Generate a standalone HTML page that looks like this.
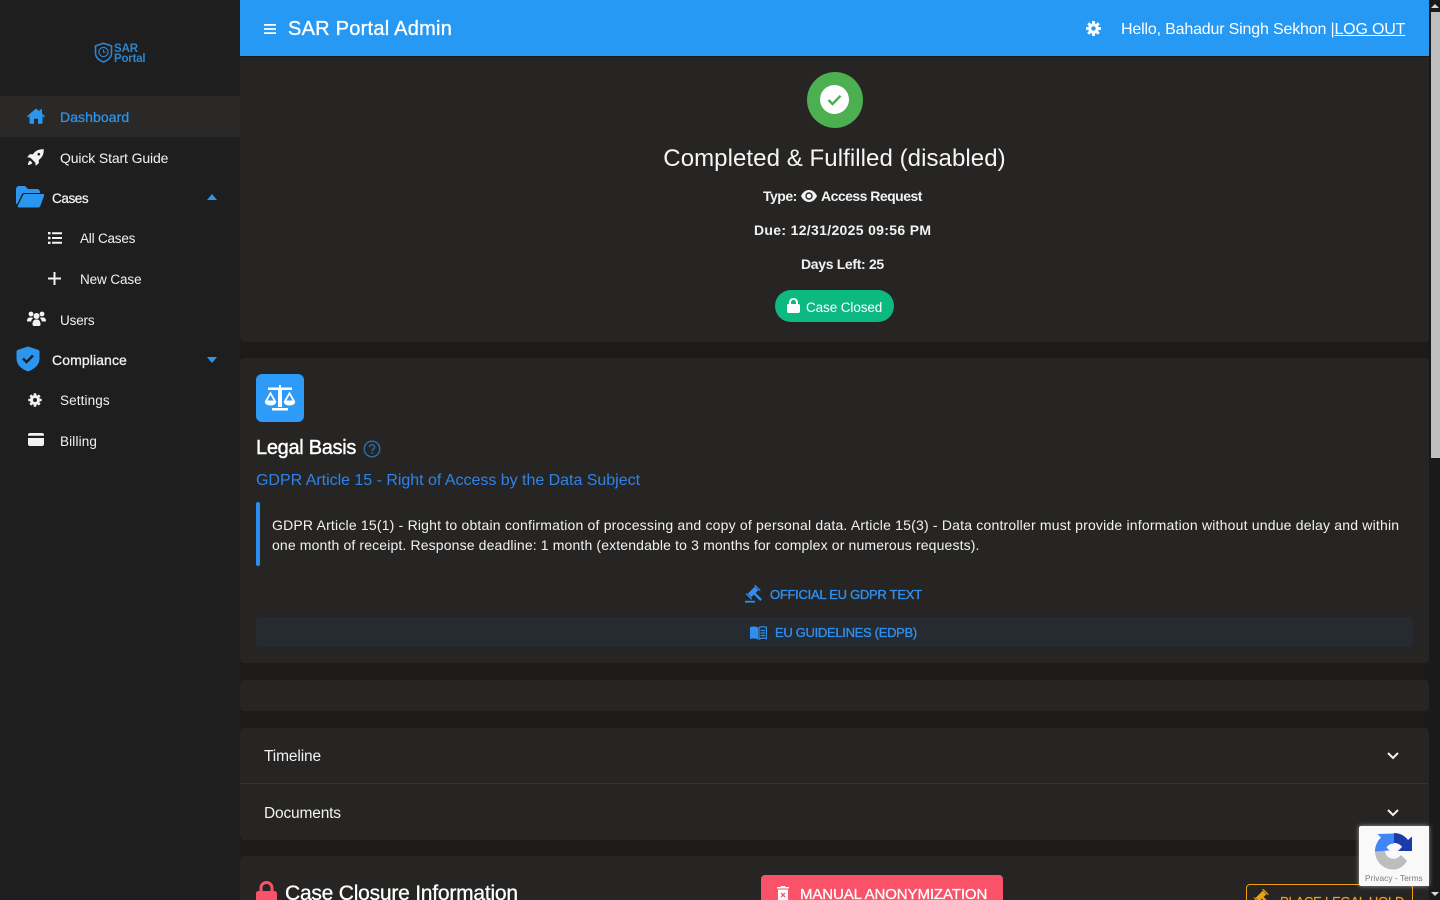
<!DOCTYPE html>
<html lang="en"><head><meta charset="utf-8"><title>SAR Portal Admin</title>
<style>
html,body{margin:0;padding:0;width:1440px;height:900px;overflow:hidden;background:#1c1b1a;font-family:"Liberation Sans",sans-serif;color:#f2f2f2}
#w{position:relative;width:1440px;height:900px;overflow:hidden}
.a{position:absolute}
.t{position:absolute;white-space:nowrap;line-height:20px;height:20px}
.c{left:240px;width:1189px;text-align:center}
.card{position:absolute;left:240px;width:1189px;background:#262524;border-radius:4px}
.s{font-size:14px}
.b{font-weight:bold}
svg{position:absolute;display:block}
</style></head><body><div id="w">

<!-- sidebar -->
<div class="a" style="left:0;top:0;width:240px;height:900px;background:#1f1e1e"></div>
<div class="a" style="left:0;top:96px;width:240px;height:41px;background:#2a2928"></div>

<svg style="left:94px;top:42px" width="19" height="21" viewBox="0 0 19 21" fill="none" stroke="#2a85d0" stroke-width="1.6"><path d="M9.5 1.2 17.5 4v7c0 4.500-3.600 7.300-8 9-4.400-1.700-8-4.500-8-9V4z"/><circle cx="9.5" cy="10" r="4.6" stroke-width="1.2"/><path d="M9.5 7.5V10.300H11.600" stroke-width="1"/></svg>
<div class="t b" style="left:114px;top:39px;font-size:11.5px;color:#2a85d0;letter-spacing:-.1px">SAR</div>
<div class="t b" style="left:114px;top:49px;font-size:11.5px;color:#2a85d0;letter-spacing:-.2px">Portal</div>

<svg style="left:27px;top:108px" width="18" height="16" viewBox="0 0 18 16" fill="#2b96ee"><path d="M9 .5 0 8.200l1 1.200L2.500 8.200V15c0 .5.300.8.800.8H7v-5h4v5h3.700c.5 0 .8-.3.8-.8V8.200L17 9.400l1-1.200-3-2.600V1.500h-2.500v1.900z"/></svg>
<div class="t s" style="left:60px;top:107px;color:#2b96ee;-webkit-text-stroke:.25px #2b96ee;letter-spacing:.08px">Dashboard</div>

<svg style="left:27px;top:149px" width="17" height="17" viewBox="0 0 17 17" fill="#f2f2f2"><path d="M16.700.3C13 0 9.500 1 7.200 3.800L6 5.200H2.700L.2 8.300l3.200.4 4.900 4.900.4 3.200 3.100-2.500v-3.300l1.400-1.200C15.800 7.500 17 4 16.700.3zM3 11.500C1.500 12.300 1 14.500.9 16c1.500-.1 3.600-.6 4.500-2.100z"/><circle cx="11.800" cy="5.200" r="1.300" fill="#1f1e1e"/></svg>
<div class="t s" style="left:60px;top:148px;letter-spacing:-.13px">Quick Start Guide</div>

<svg style="left:16px;top:186px" width="28" height="22" viewBox="0 0 28 22" fill="#2b96ee"><path d="M0 3a3 3 0 0 1 3-3h6l3 3h9a3 3 0 0 1 3 3v1H8.500c-1.300 0-2.500.8-3 2L1 18.500C.3 18 0 17.500 0 16.500z"/><path d="M7 9.200c.3-.7 1-1.200 1.800-1.200H27c1 0 1.500.8 1.200 1.600l-4 10.700c-.4.800-1 1.200-1.900 1.200H3c-1 0-1.500-.8-1.200-1.600z"/></svg>
<div class="t s" style="left:52px;top:188px;font-size:13.5px;line-height:21px;-webkit-text-stroke:.25px #f2f2f2;letter-spacing:-.4px">Cases</div>
<svg style="left:207px;top:194px" width="10" height="6" viewBox="0 0 10 6" fill="#2b96ee"><path d="M0 6 5 0l5 6z"/></svg>

<svg style="left:48px;top:232px" width="14" height="12" viewBox="0 0 14 12" fill="#f2f2f2"><path d="M0 0h2.500v2.400H0zM4 .2h10v2H4zM0 4.800h2.500v2.400H0zM4 5h10v2H4zM0 9.600h2.500V12H0zM4 9.800h10v2H4z"/></svg>
<div class="t" style="left:80px;top:229px;font-size:13.5px;letter-spacing:-.2px">All Cases</div>

<svg style="left:48px;top:272px" width="13" height="13" viewBox="0 0 13 13" fill="#f2f2f2"><path d="M5.500 0h2v5.500H13v2H7.500V13h-2V7.500H0v-2h5.500z"/></svg>
<div class="t" style="left:80px;top:270px;font-size:13.5px;letter-spacing:-.1px">New Case</div>

<svg style="left:27px;top:311px" width="19" height="15" viewBox="0 0 19 15" fill="#f2f2f2"><circle cx="4" cy="3" r="2.400"/><circle cx="15" cy="3" r="2.400"/><circle cx="9.500" cy="5" r="3"/><path d="M0 10c0-2 1-3.500 2.500-3.500H5c.5 0 1 .2 1.300.5C5 8 4.300 9.200 4.200 10.500H1c-.6 0-1-.2-1-.5zM19 10c0 .3-.4.5-1 .5h-3.200c-.1-1.300-.8-2.500-2.100-3.500.3-.3.800-.5 1.300-.5h2.500C18 6.500 19 8 19 10zM5.500 13c0-2.500 1.500-4.500 3-4.500h2c1.500 0 3 2 3 4.500v.5c0 .8-.6 1.500-1.500 1.500H7c-.9 0-1.500-.7-1.500-1.500z"/></svg>
<div class="t" style="left:60px;top:311px;font-size:13.5px;letter-spacing:-.15px">Users</div>

<svg style="left:16px;top:346px" width="24" height="26" viewBox="0 0 24 26"><path fill="#2b96ee" d="M12 .5 22 3.800c1 .3 1.500 1 1.500 2v7c0 6-5 10.500-11.500 12.700C5.500 23.300.5 18.800.5 12.800v-7c0-1 .5-1.700 1.500-2z"/><path d="M7 12.500l3.500 3.500 6.500-6.500" fill="none" stroke="#1f1e1e" stroke-width="2.500"/></svg>
<div class="t s" style="left:52px;top:350px;-webkit-text-stroke:.3px #f2f2f2;letter-spacing:.1px">Compliance</div>
<svg style="left:207px;top:357px" width="10" height="6" viewBox="0 0 10 6" fill="#2b96ee"><path d="M0 0h10L5 6z"/></svg>

<svg style="left:28px;top:393px" width="14" height="14" viewBox="0 0 14 14"><path d="M7 .3v13.400M.3 7h13.400M2.300 2.300l9.400 9.400M11.700 2.300l-9.400 9.400" stroke="#f2f2f2" stroke-width="2.600"/><circle cx="7" cy="7" r="5" fill="#f2f2f2"/><circle cx="7" cy="7" r="2" fill="#1f1e1e"/></svg>
<div class="t" style="left:60px;top:391px;font-size:13.5px;letter-spacing:.12px">Settings</div>

<svg style="left:28px;top:433px" width="16" height="13" viewBox="0 0 16 13" fill="#f2f2f2"><path d="M2 0h12a2 2 0 0 1 2 2v.800H0V2a2 2 0 0 1 2-2zM0 5h16v6a2 2 0 0 1-2 2H2a2 2 0 0 1-2-2z"/></svg>
<div class="t" style="left:60px;top:432px;font-size:13.5px;letter-spacing:.15px">Billing</div>

<!-- header -->
<div class="a" style="left:240px;top:0;width:1189px;height:56px;background:#2699f5"></div>
<svg style="left:264px;top:24px" width="12" height="10" viewBox="0 0 12 10" fill="#fff"><path d="M0 0h12v1.800H0zM0 4.100h12v1.800H0zM0 8.200h12V10H0z"/></svg>
<div class="t" style="left:288px;top:19px;font-size:20px;color:#fff;-webkit-text-stroke:.35px #fff;letter-spacing:.25px">SAR Portal Admin</div>
<svg style="left:1086px;top:21px" width="15" height="15" viewBox="0 0 15 15"><path d="M7.500 0v15M0 7.500h15M2.200 2.200l10.600 10.600M12.800 2.200 2.200 12.800" stroke="#fff" stroke-width="2.800"/><circle cx="7.500" cy="7.500" r="5.300" fill="#fff"/><circle cx="7.500" cy="7.500" r="2.200" fill="#2699f5"/></svg>
<div class="t" style="left:1121px;top:20px;font-size:16px;color:#fff;letter-spacing:-.175px">Hello, Bahadur Singh Sekhon |<span style="text-decoration:underline">LOG OUT</span></div>

<!-- hero card -->
<div class="card" style="top:56px;height:286px;border-radius:0 0 4px 4px"></div>
<div class="a" style="left:240px;top:56px;width:1189px;height:1px;background:#1b1a1a"></div>
<div class="a" style="left:807px;top:72px;width:56px;height:56px;border-radius:50%;background:#4caf50"></div>
<div class="a" style="left:820px;top:85px;width:29px;height:29px;border-radius:50%;background:#fff"></div>
<svg style="left:827px;top:94px" width="15" height="12" viewBox="0 0 15 12" fill="none" stroke="#4caf50" stroke-width="2.400"><path d="M1.500 6 5.500 10 13.500 1.800"/></svg>
<div class="t c" style="top:148px;height:22px;line-height:22px;font-size:24px;letter-spacing:.07px;color:#f5f5f5">Completed &amp; Fulfilled (disabled)</div>
<div class="t b" style="left:763px;top:186px;font-size:14px;letter-spacing:-.5px">Type:</div>
<svg style="left:801px;top:190px" width="16" height="12" viewBox="0 0 16 12"><path d="M0 6C1.500 2.500 4.500 0 8 0s6.500 2.500 8 6c-1.500 3.500-4.500 6-8 6S1.500 9.500 0 6z" fill="#f2f2f2"/><circle cx="8" cy="6" r="3.700" fill="#262524"/><circle cx="8" cy="6" r="2.300" fill="#f2f2f2"/></svg>
<div class="t b" style="left:821px;top:186px;font-size:14px;letter-spacing:-.52px">Access Request</div>
<div class="t b" style="left:754px;top:220px;font-size:14px;letter-spacing:.32px">Due: 12/31/2025 09:56 PM</div>
<div class="t b" style="left:801px;top:254px;font-size:14px;letter-spacing:-.33px">Days Left: 25</div>
<div class="a" style="left:775px;top:290px;width:119px;height:32px;border-radius:16px;background:#0cb981"></div>
<svg style="left:787px;top:298px" width="13" height="15" viewBox="0 0 13 15" fill="#fff"><path d="M2 6V4.200a4.500 4.200 0 0 1 9 0V6h.500c.8 0 1.500.7 1.500 1.500v6c0 .8-.7 1.500-1.500 1.500h-10C.7 15 0 14.300 0 13.500v-6C0 6.700.7 6 1.500 6zm2 0h5V4.200a2.500 2.300 0 0 0-5 0z"/></svg>
<div class="t" style="left:806px;top:297px;font-size:13.5px;line-height:21px;color:#fff;letter-spacing:-.1px">Case Closed</div>

<!-- legal basis -->
<div class="card" style="top:358px;height:305px"></div>
<div class="a" style="left:256px;top:374px;width:48px;height:48px;border-radius:6px;background:#2f9bf9"></div>
<svg style="left:264px;top:385px" width="32" height="26" viewBox="0 0 32 26" fill="#fff"><path d="M15 0h2v2.500h11V5H18v17h-4V5H4V2.500h11zM8 23h16v2.500H8z"/><path d="M6.500 6.500 .8 16.500c0 2.600 2.600 4 5.700 4s5.700-1.400 5.700-4zm0 3.500 3 5.500h-6zM25.500 6.500l-5.700 10c0 2.600 2.600 4 5.700 4s5.700-1.400 5.700-4zm0 3.500 3 5.500h-6z"/></svg>
<div class="t" style="left:256px;top:438px;font-size:20px;color:#fff;-webkit-text-stroke:.4px #fff;letter-spacing:-.3px">Legal Basis</div>
<svg style="left:363px;top:440px" width="18" height="18" viewBox="0 0 18 18" fill="none" stroke="#2a6fad" stroke-width="1.400"><circle cx="9" cy="9" r="7.800"/><path d="M6.500 7.200c0-1.500 1.100-2.500 2.600-2.500s2.500 1 2.500 2.300c0 1.900-2.500 2-2.500 4"/><path d="M9.100 12.400v1.400" stroke-width="1.600"/></svg>
<div class="t" style="left:256px;top:471px;font-size:16px;color:#2f83e8;letter-spacing:-.02px">GDPR Article 15 - Right of Access by the Data Subject</div>
<div class="a" style="left:256px;top:502px;width:4px;height:64px;border-radius:2px;background:#2a8df0"></div>
<div class="t" style="left:272px;top:515px;font-size:14px;letter-spacing:.195px;color:#f2f2f2">GDPR Article 15(1) - Right to obtain confirmation of processing and copy of personal data. Article 15(3) - Data controller must provide information without undue delay and within</div>
<div class="t" style="left:272px;top:535px;font-size:14px;letter-spacing:.14px;color:#f2f2f2">one month of receipt. Response deadline: 1 month (extendable to 3 months for complex or numerous requests).</div>
<svg style="left:745px;top:585px" width="17" height="18" viewBox="0 0 17 18" fill="#2f8ff0"><g transform="rotate(45 8 7)"><rect x="5.500" y="2" width="5" height="10"/><rect x="4.200" y=".3" width="8" height="1.300"/><rect x="4.200" y="12.400" width="8" height="1.300"/><rect x="10" y="5.800" width="9.500" height="2.400"/></g><rect x="0" y="15.800" width="10" height="1.800"/></svg>
<div class="t" style="left:770px;top:585px;font-size:13px;color:#2f8ff0;letter-spacing:-.27px;-webkit-text-stroke:.35px #2f8ff0">OFFICIAL EU GDPR TEXT</div>
<div class="a" style="left:256px;top:617px;width:1157px;height:30px;border-radius:4px;background:#252b31"></div>
<svg style="left:750px;top:626px" width="17" height="14" viewBox="0 0 17 14"><path fill="#2f8ff0" d="M0 1.200C2.500.2 6 .2 8 1.500v12C6 12.300 2.500 12.300 0 13z"/><path fill="none" stroke="#2f8ff0" stroke-width="1.200" d="M9 1.700c2-1.200 5-1.200 7.400-.4v11.400c-2.400-.7-5.400-.7-7.400.5zM10.500 4.500H15M10.500 7H15M10.500 9.500H15"/></svg>
<div class="t" style="left:775px;top:623px;font-size:13px;color:#2f8ff0;letter-spacing:-.31px;-webkit-text-stroke:.35px #2f8ff0">EU GUIDELINES (EDPB)</div>

<!-- empty -->
<div class="card" style="top:680px;height:31px"></div>

<!-- accordion -->
<div class="card" style="top:728px;height:112px"></div>
<div class="a" style="left:240px;top:783px;width:1189px;height:1px;background:#343332"></div>
<div class="t" style="left:264px;top:747px;font-size:15.5px;color:#f2f2f2;letter-spacing:-.12px">Timeline</div>
<div class="t" style="left:264px;top:804px;font-size:15.5px;color:#f2f2f2;letter-spacing:-.17px">Documents</div>
<svg style="left:1387px;top:752px" width="12" height="8" viewBox="0 0 12 8" fill="none" stroke="#f2f2f2" stroke-width="2"><path d="M1 1l5 5 5-5"/></svg>
<svg style="left:1387px;top:809px" width="12" height="8" viewBox="0 0 12 8" fill="none" stroke="#f2f2f2" stroke-width="2"><path d="M1 1l5 5 5-5"/></svg>

<!-- closure -->
<div class="card" style="top:856px;height:60px"></div>
<svg style="left:256px;top:881px" width="21" height="24" viewBox="0 0 21 24" fill="#fa5268"><path d="M3.500 10V7a7 7 0 0 1 14 0v3h1c1.400 0 2.500 1.100 2.500 2.500v9c0 1.400-1.100 2.500-2.500 2.500h-16C1.100 24 0 22.900 0 21.500v-9C0 11.100 1.100 10 2.500 10zm3 0h8V7a4 4 0 0 0-8 0z"/></svg>
<div class="t" style="left:285px;top:884px;font-size:21px;color:#fff;-webkit-text-stroke:.3px #fff;letter-spacing:-.22px">Case Closure Information</div>
<div class="a" style="left:761px;top:875px;width:242px;height:40px;border-radius:4px;background:#fa5268"></div>
<svg style="left:777px;top:886px" width="12" height="14" viewBox="0 0 12 14" fill="#fff"><path d="M4 0h4l.5 1H12v1.500H0V1h3.500zM1 3.500h10V14H1z"/><path d="M4 7l4 4M8 7l-4 4" stroke="#fa5268" stroke-width="1.300"/></svg>
<div class="t" style="left:800px;top:885px;font-size:15px;color:#fff;-webkit-text-stroke:.3px #fff;letter-spacing:-.1px">MANUAL ANONYMIZATION</div>
<div class="a" style="left:1246px;top:884px;width:165px;height:30px;border:1px solid #f2a010;border-radius:4px"></div>
<svg style="left:1253px;top:889px" width="17" height="18" viewBox="0 0 17 18" fill="#f2a010"><g transform="rotate(45 8 7)"><rect x="5.500" y="2" width="5" height="10"/><rect x="4.200" y=".3" width="8" height="1.300"/><rect x="4.200" y="12.400" width="8" height="1.300"/><rect x="10" y="5.800" width="9.500" height="2.400"/></g></svg>
<div class="t" style="left:1280px;top:892px;font-size:13px;color:#f2a010;-webkit-text-stroke:.2px #f2a010;letter-spacing:-.2px">PLACE LEGAL HOLD</div>

<!-- scrollbar -->
<div class="a" style="left:1429px;top:0;width:11px;height:900px;background:#1b1a1a"></div>
<div class="a" style="left:1431px;top:12px;width:9px;height:446px;background:#bfbfbf"></div>
<svg style="left:1431px;top:3px" width="8" height="5" viewBox="0 0 8 5" fill="#d8d8d8"><path d="M0 5 4 1l4 4z"/></svg>
<svg style="left:1431px;top:892px" width="8" height="5" viewBox="0 0 8 5" fill="#d8d8d8"><path d="M0 0h8L4 4z"/></svg>

<!-- recaptcha -->
<div class="a" style="left:1359px;top:826px;width:70px;height:60px;background:#f9f9f9;border-radius:2px 0 0 2px;box-shadow:0 0 5px rgba(255,255,255,.55)"></div>
<svg style="left:1375px;top:832px" width="38" height="38" viewBox="0 0 38 38">
<path fill="#bdbdbd" d="M0 19H10c.3 4 2.500 6.500 6.500 7.500 4 .8 7-.5 9.300-3.500L32 28.700C29 34 24.500 37.500 18 37.500 8 37.500 0 29 0 19z"/>
<path fill="#4285f4" d="M0 19C0 12.500 3 8 6 5L2.500 1.500 19 1V11c-3.500 0-6 1.500-7.500 4L14.500 18 0 19z" transform="translate(0 .5)"/>
<path fill="#1c3aa9" d="M19 1c6 0 11 3 14 7L37 4.500V19H23l4-4c-1.500-2.500-4.500-4-8-4z"/>
</svg>
<div class="t" style="left:1365px;top:868px;font-size:8.3px;color:#7a7a7a;letter-spacing:.05px">Privacy - Terms</div>
</div></body></html>
